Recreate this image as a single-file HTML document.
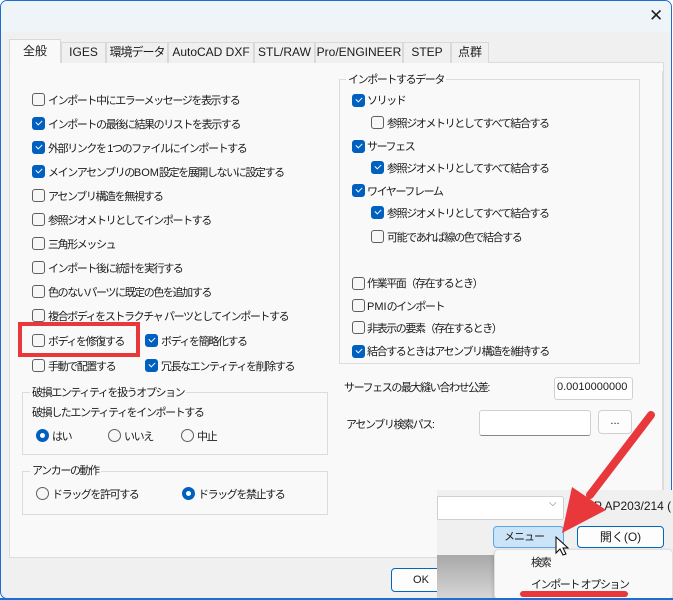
<!DOCTYPE html>
<html><head><meta charset="utf-8"><style>
*{margin:0;padding:0;box-sizing:border-box}
body{width:673px;height:600px;overflow:hidden;background:#fff;font-family:"Liberation Sans","Noto Sans CJK JP",sans-serif;font-size:11px;color:#1a1a1a;position:relative}
.a{position:absolute;white-space:nowrap}
.t{letter-spacing:-1.4px}
.dlg{position:absolute;left:0;top:0;width:672px;height:599px;border:1px solid #1b6ed4;border-radius:7px;background:#f0f0f0;overflow:hidden}
.title{position:absolute;left:0;top:0;width:100%;height:31px;background:#eff4f9}
.cb{position:absolute;width:13px;height:13px;border:1px solid #5f5f5f;border-radius:3px;background:#f7f7f7}
.cb.on{background:#0060c0;border-color:#0060c0}
.cb.on::after{content:"";position:absolute;left:3px;top:2px;width:5px;height:3px;border-left:1.3px solid #fff;border-bottom:1.3px solid #fff;transform:rotate(-45deg)}
.rb{position:absolute;width:13px;height:13px;border:1px solid #5f5f5f;border-radius:50%;background:#f7f7f7}
.rb.on{border:4px solid #0060c0;background:#fff}
.tab{position:absolute;top:41px;height:21px;border:1px solid #d9d9d9;border-bottom:none;background:#f0f0f0;text-align:center;line-height:19px;font-size:12px}
.grp{position:absolute;border:1px solid #dcdcdc}
.lbl{position:absolute;background:#f9f9f9;padding:0 2px;white-space:nowrap;letter-spacing:-1.4px}
.inp{position:absolute;background:#fff;border:1px solid #d0d0d0;border-bottom:1px solid #888;border-radius:3px}
.btn{position:absolute;background:#fdfdfd;border:1px solid #d0d0d0;border-radius:4px;text-align:center}
</style></head><body>
<div class="dlg">
<div class="title"></div>
<div class="a" style="left:648px;top:5px;font-size:17px;color:#222">✕</div>
<div class="a" style="left:8px;top:61px;width:655px;height:496px;background:#f9f9f9;border:1px solid #dcdcdc"></div>
<div class="tab" style="left:8px;top:38px;width:52px;height:24px;background:#f9f9f9;line-height:22px">全般</div>
<div class="tab" style="left:60px;width:45px">IGES</div>
<div class="tab" style="left:105px;width:62px;letter-spacing:-1px">環境データ</div>
<div class="tab" style="left:167px;width:86px">AutoCAD DXF</div>
<div class="tab" style="left:253px;width:61px">STL/RAW</div>
<div class="tab" style="left:314px;width:88px">Pro/ENGINEER</div>
<div class="tab" style="left:402px;width:48px">STEP</div>
<div class="tab" style="left:450px;width:38px">点群</div>

<div class="cb" style="left:31px;top:92px"></div><div class="a t" style="left:47px;top:91px">インポート中にエラーメッセージを表示する</div>
<div class="cb on" style="left:31px;top:116px"></div><div class="a t" style="left:47px;top:115px">インポートの最後に結果のリストを表示する</div>
<div class="cb on" style="left:31px;top:140px"></div><div class="a t" style="left:47px;top:139px">外部リンクを 1つのファイルにインポートする</div>
<div class="cb on" style="left:31px;top:164px"></div><div class="a t" style="left:47px;top:163px">メインアセンブリの<span style="letter-spacing:0">BOM</span>設定を展開しないに設定する</div>
<div class="cb" style="left:31px;top:188px"></div><div class="a t" style="left:47px;top:187px">アセンブリ構造を無視する</div>
<div class="cb" style="left:31px;top:212px"></div><div class="a t" style="left:47px;top:211px">参照ジオメトリとしてインポートする</div>
<div class="cb" style="left:31px;top:236px"></div><div class="a t" style="left:47px;top:235px">三角形メッシュ</div>
<div class="cb" style="left:31px;top:260px"></div><div class="a t" style="left:47px;top:259px">インポート後に統計を実行する</div>
<div class="cb" style="left:31px;top:284px"></div><div class="a t" style="left:47px;top:283px">色のないパーツに既定の色を追加する</div>
<div class="cb" style="left:31px;top:308px"></div><div class="a t" style="left:47px;top:307px">複合ボディをストラクチャ パーツとしてインポートする</div>
<div class="cb" style="left:31px;top:333px"></div><div class="a t" style="left:47px;top:332px">ボディを修復する</div>
<div class="cb on" style="left:144px;top:333px"></div><div class="a t" style="left:160px;top:332px">ボディを簡略化する</div>
<div class="cb" style="left:31px;top:358px"></div><div class="a t" style="left:47px;top:357px">手動で配置する</div>
<div class="cb on" style="left:144px;top:358px"></div><div class="a t" style="left:160px;top:357px">冗長なエンティティを削除する</div>
<div class="a" style="left:17px;top:321px;width:122px;height:35px;border:4px solid #e8383b"></div>

<div class="grp" style="left:21px;top:391px;width:306px;height:63px"></div>
<div class="lbl" style="left:29px;top:383px">破損エンティティを扱うオプション</div>
<div class="a t" style="left:31px;top:403px">破損したエンティティをインポートする</div>
<div class="rb on" style="left:35px;top:428px"></div><div class="a t" style="left:51px;top:427px">はい</div>
<div class="rb" style="left:107px;top:428px"></div><div class="a t" style="left:123px;top:427px">いいえ</div>
<div class="rb" style="left:180px;top:428px"></div><div class="a t" style="left:196px;top:427px">中止</div>

<div class="grp" style="left:21px;top:470px;width:306px;height:44px"></div>
<div class="lbl" style="left:29px;top:461px">アンカーの動作</div>
<div class="rb" style="left:35px;top:486px"></div><div class="a t" style="left:51px;top:485px">ドラッグを許可する</div>
<div class="rb on" style="left:181px;top:486px"></div><div class="a t" style="left:197px;top:485px">ドラッグを禁止する</div>

<div class="grp" style="left:338px;top:78px;width:301px;height:285px"></div>
<div class="lbl" style="left:345px;top:70px">インポートするデータ</div>
<div class="cb on" style="left:351px;top:93px"></div><div class="a t" style="left:366px;top:91px">ソリッド</div>
<div class="cb" style="left:370px;top:115px"></div><div class="a t" style="left:386px;top:114px">参照ジオメトリとしてすべて結合する</div>
<div class="cb on" style="left:351px;top:139px"></div><div class="a t" style="left:366px;top:137px">サーフェス</div>
<div class="cb on" style="left:370px;top:160px"></div><div class="a t" style="left:386px;top:159px">参照ジオメトリとしてすべて結合する</div>
<div class="cb on" style="left:351px;top:183px"></div><div class="a t" style="left:366px;top:182px">ワイヤーフレーム</div>
<div class="cb on" style="left:370px;top:205px"></div><div class="a t" style="left:386px;top:204px">参照ジオメトリとしてすべて結合する</div>
<div class="cb" style="left:370px;top:229px"></div><div class="a t" style="left:386px;top:228px">可能であれば線の色で結合する</div>
<div class="cb" style="left:351px;top:276px"></div><div class="a t" style="left:366px;top:274px">作業平面（存在するとき）</div>
<div class="cb" style="left:351px;top:298px"></div><div class="a t" style="left:366px;top:297px"><span style="letter-spacing:0">PMI</span>のインポート</div>
<div class="cb" style="left:351px;top:320px"></div><div class="a t" style="left:366px;top:319px">非表示の要素（存在するとき）</div>
<div class="cb on" style="left:351px;top:344px"></div><div class="a t" style="left:366px;top:342px">結合するときはアセンブリ構造を維持する</div>
<div class="a t" style="left:343px;top:378px">サーフェスの最大縫い合わせ公差:</div>
<div class="inp" style="left:553px;top:376px;width:79px;height:23px;border-bottom-color:#d0d0d0"></div>
<div class="a" style="left:556px;top:380px;font-size:11px">0.0010000000</div>
<div class="a t" style="left:345px;top:415px">アセンブリ検索パス:</div>
<div class="inp" style="left:478px;top:409px;width:112px;height:26px"></div>
<div class="btn" style="left:597px;top:409px;width:34px;height:24px;line-height:20px">...</div>
<div class="a" style="left:661px;top:70px;width:1px;height:420px;background:#dcdcdc"></div>

<div class="btn" style="left:390px;top:567px;width:60px;height:24px;border-color:#0067c0;line-height:22px">OK</div>
</div>

<div class="a" style="left:437px;top:490px;width:236px;height:110px;background:#f0f0f0"></div>
<div class="a" style="left:437px;top:555px;width:60px;height:45px;background:linear-gradient(#a8a8a8,#d8d8d8)"></div>
<div class="inp" style="left:437px;top:496px;width:127px;height:24px;border-radius:0 3px 3px 0;border-bottom-color:#d0d0d0"></div>
<div class="a" style="left:549px;top:498px;color:#666;font-size:10px">⌵</div>
<div class="a" style="left:586px;top:499px;font-size:12px">EP AP203/214 (</div>
<div class="btn" style="left:493px;top:526px;width:71px;height:22px;background:#cce4f7;border-color:#5ea5e6;line-height:20px;text-align:left;padding-left:10px;letter-spacing:-1px">メニュー</div>
<div class="btn" style="left:577px;top:526px;width:87px;height:22px;border-color:#0067c0;line-height:20px;font-size:12px">開く(O)</div>
<div class="a" style="left:494px;top:549px;width:179px;height:51px;background:#f9f9f9;border:1px solid #e0e0e0;border-radius:5px;box-shadow:0 2px 4px rgba(0,0,0,.2)"></div>
<div class="a t" style="left:531px;top:554px">検索</div>
<div class="a t" style="left:531px;top:576px">インポート オプション</div>
<div class="a" style="left:520px;top:591px;width:108px;height:6px;background:#e8383b;border-radius:3px"></div>
<div class="a" style="left:0;top:598px;width:673px;height:2px;background:#1b6ed4"></div>

<svg class="a" style="left:0;top:0" width="673" height="600">
<line x1="651" y1="415" x2="590" y2="495" stroke="#e8383b" stroke-width="8" stroke-linecap="round"/>
<polygon points="562,533 572,487 606,510" fill="#e8383b"/>
<path d="M556,537 L556,553 L560,549 L563,555 L566,554 L563,548 L568,548 Z" fill="#fff" stroke="#000" stroke-width="1"/>
</svg>
</body></html>
